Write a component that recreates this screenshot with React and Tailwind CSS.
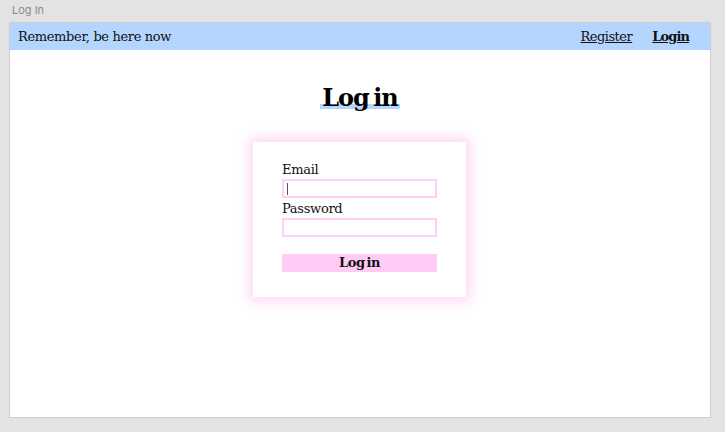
export default function App() {
  const serif = { fontFamily: '"DejaVu Serif", "Liberation Serif", serif' };
  return (
    <div className="w-[725px] h-[432px] bg-[#e3e3e3] flex flex-col">
      <div className="h-[22px] pl-[12px] pt-[2px] text-[11px] text-[#8a8a8a]" style={{ fontFamily: '"Inter", "Liberation Sans", sans-serif' }}>Log In</div>
      <div className="ml-[9px] w-[702px] h-[396px] border border-[#cfcfcf] bg-white flex flex-col" style={serif}>
        <div className="h-[27px] bg-[#b4d5fe] flex items-center justify-between pl-[8px] pr-[21px] text-[13px] text-[#111]">
          <span className="tracking-[-0.35px]">Remember, be here now</span>
          <div className="flex gap-[20px]">
            <a className="underline tracking-[-0.5px]">Register</a>
            <a className="underline font-bold tracking-[-0.9px]">Login</a>
          </div>
        </div>
        <div className="flex flex-col items-center pt-[33px]">
          <h1 className="text-[24px] leading-[30px] font-bold tracking-[-1px] [word-spacing:-3px] text-black px-[2px]" style={{ background: 'linear-gradient(to bottom, transparent 70%, #b4d5fe 70%, #b4d5fe 85%, transparent 85%)' }}>Log in</h1>
          <div className="mt-[29px] mr-[1px] w-[213px] h-[155px] bg-white shadow-[0_0_12px_4px_#ffd6f6] pt-[20px] px-[29px] flex flex-col text-[13px] text-[#111]">
            <label className="leading-[16px] tracking-[-0.3px]">Email</label>
            <div className="h-[19px] border-2 border-[#ffd0f4] mt-[1px] flex items-center pl-[3px]"><span className="w-px h-[12px] bg-[#555]"></span></div>
            <label className="mt-[3px] leading-[16px] tracking-[-0.3px]">Password</label>
            <div className="h-[19px] border-2 border-[#ffd0f4] mt-[1px]"></div>
            <button className="mt-[17px] h-[18px] bg-[#ffcbf4] font-bold text-[13px] leading-[18px] tracking-[-0.5px] [word-spacing:-2px]">Log in</button>
          </div>
        </div>
      </div>
    </div>
  );
}
